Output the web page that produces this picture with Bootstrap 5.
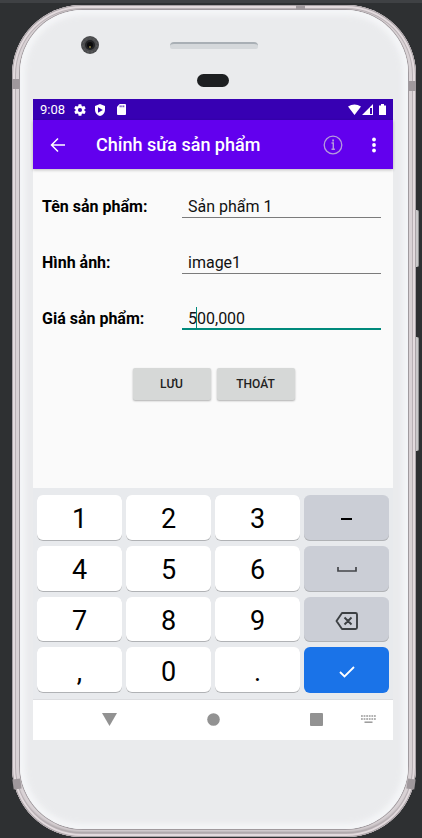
<!DOCTYPE html>
<html lang="vi">
<head>
<meta charset="utf-8">
<meta name="viewport" content="width=device-width, initial-scale=1">
<title>Chỉnh sửa sản phẩm</title>
<link href="https://cdn.jsdelivr.net/npm/bootstrap@5.3.0/dist/css/bootstrap.min.css" rel="stylesheet">
<style>
body { background: #2e3032; font-family: Roboto, "Noto Sans", sans-serif; color: #000; }
svg { display: block; flex: none; }
.stage { padding: 2px 6px 0 12px; border-top: 3px solid #3f4144; }
.phone { padding: 5px 8px 8px; border-radius: 70px; background: #d9d2d5;
  box-shadow: inset 0 0 0 1px #aaa3a7, inset 0 0 0 3px #e2dadd, inset 0 0 0 4px #b9b1b5, inset 0 -5px 3px #9b9598; }
.face { border-radius: 63px; padding: 0 15px 0 13px; background: #eaebed;
  box-shadow: 0 0 0 1px #a09a9e, inset 0 0 4px 4px #f4f5f7, inset 0 0 6px 6px #f0f1f3; }
.top-bezel { height: 89px; padding-top: 32px; }
.camera { top: 26px; left: 61px; width: 18px; height: 18px; }
.speaker { width: 88px; height: 7px; border-radius: 4px 4px 2px 2px; margin-left: 2px; background: #d5d8db; border-top: 2px solid #a9afb5; }
.sensor { width: 32px; height: 13px; margin-top: 25px; background: #1d1f21; }
.chin { height: 89px; }
.band { background: #9f989c; width: 8px; height: 10px; }
.band-l { left: 0; top: 74px; } .band-r { right: 0; top: 76px; }
.band-lb { left: 1px; bottom: 48px; transform: rotate(-8deg); } .band-rb { right: 1px; bottom: 48px; transform: rotate(8deg); }
.band-t { right: 111px; top: 0; width: 9px; height: 5px; }
.side-key { right: -3px; width: 3px; border-radius: 0 2px 2px 0; background: #c9c8c9; border-right: 1px solid #929394; }
.side-power { top: 205px; height: 57px; } .side-volume { top: 332px; height: 114px; }
.status-bar { height: 21px; background: #3700b3; font-size: 13px; line-height: 21px; padding: 0 7px; }
.app-bar { height: 49px; background: #6200ee; padding: 0 14px 0 16px; box-shadow: 0 1px 3px rgba(0,0,0,.25); }
.app-title { font-size: 18px; line-height: 24px; font-weight: 500; margin-left: 29px; padding-top: 1px; }
.info-btn { margin-right: 26px; }
.product-form { background: #fafafa; padding: 21px 12px 88px 9px; font-size: 16px; }
.field-row { margin-bottom: 28px; }
.field-label { width: 140px; line-height: 20px; padding-top: 7px; font-weight: 700; height: 28px; }
.field-input { height: 28px; border: 0; border-bottom: 1px solid #7b7b7b; border-radius: 0; background: transparent; padding: 6px 6px 0; line-height: 20px; color: #111; outline: 0; }
.field-active { border-bottom: 2px solid #00897b; }
.caret { left: 14px; top: 5px; width: 1px; height: 21px; background: #00897b; }
.form-actions { gap: 6px; padding-top: 10px; margin-right: -4px; }
.action-btn { width: 78px; height: 32px; border: 0; border-radius: 2px; background: #d6d8d7; color: #222; font-size: 12px; font-weight: 500; padding: 0; box-shadow: 0 1px 2px rgba(0,0,0,.3); }
.keypad { display: grid; grid-template-columns: repeat(4, 1fr); grid-template-rows: repeat(4, 1fr); gap: 5px 4px; height: 211px; padding: 7px 4px 6px; background: #e8eaed; }
.keycap { border: 0; border-radius: 6px; background: #fff; color: #000; font-size: 27px; line-height: 32px; padding: 3px 0 0; box-shadow: inset 0 -1px 0 #b0b2b5; }
.key-alt { background: #cbced6; }
.key-done { background: #1a73e8; box-shadow: none; }
.nav-strip { height: 41px; background: #fff; border-top: 1px solid #dcdde0; padding: 0 17px 2px 69px; }
.nav-main { gap: 90px; }
.bare { background: none; border: 0; padding: 0; color: inherit; }
</style>
</head>
<body>
<div class="stage">
<main class="phone position-relative">
  <span class="band band-l position-absolute"></span><span class="band band-r position-absolute"></span>
  <span class="band band-lb position-absolute"></span><span class="band band-rb position-absolute"></span>
  <span class="band band-t position-absolute"></span>
  <span class="side-key side-power position-absolute"></span><span class="side-key side-volume position-absolute"></span>
  <div class="face position-relative">
    <div class="top-bezel d-flex flex-column align-items-center">
      <svg class="camera position-absolute" viewBox="0 0 18 18" aria-hidden="true"><circle cx="9" cy="9" r="9" fill="#4a4b4d"/><circle cx="9" cy="9" r="7" fill="none" stroke="#5f5f60" stroke-dasharray="2 2"/><circle cx="9" cy="9" r="5" fill="#222325"/><circle cx="9" cy="9" r="3" fill="#0a0a0b"/><circle cx="9" cy="11" r="1" fill="#8b8141"/></svg>
      <div class="speaker"></div>
      <div class="sensor rounded-pill"></div>
    </div>

    <div class="status-bar d-flex align-items-center text-white">
      <span>9:08</span>
      <svg class="ms-2" width="14" height="14" viewBox="0 0 24 24" fill="#fff" aria-hidden="true"><path d="M19.4 13c0-.3.1-.6.1-1s0-.7-.1-1l2.1-1.600a.5.5 0 0 0 .1-.6l-2-3.500a.5.5 0 0 0-.6-.2l-2.500 1a7 7 0 0 0-1.700-1l-.4-2.600a.5.5 0 0 0-.5-.5h-4a.5.5 0 0 0-.5.4l-.4 2.700a7 7 0 0 0-1.700 1l-2.500-1a.5.5 0 0 0-.6.200l-2 3.500a.5.5 0 0 0 .1.600L4.500 11a8 8 0 0 0 0 2l-2.100 1.600a.5.5 0 0 0-.1.600l2 3.500c.1.200.4.300.6.200l2.500-1a7 7 0 0 0 1.700 1l.4 2.700c0 .2.200.4.5.4h4c.200 0 .5-.2.5-.4l.4-2.700a7 7 0 0 0 1.700-1l2.500 1c.200.1.5 0 .6-.2l2-3.500a.5.5 0 0 0-.1-.6zM12 15.500a3.500 3.500 0 1 1 0-7 3.500 3.500 0 0 1 0 7z"/></svg>
      <svg class="mx-2" width="10" height="12" viewBox="0 0 10 12" aria-hidden="true"><path fill="#fff" d="M5 0 0 2v4c0 3 2 5.300 5 6 3-.7 5-3 5-6V2z"/><path fill="#3700b3" d="M3 3.200v5.600L7.800 6z"/></svg>
      <svg class="ms-1" width="9" height="11" viewBox="0 0 10 12" aria-hidden="true"><path fill="#fff" d="M3 0h6q1 0 1 1v10q0 1-1 1H1q-1 0-1-1V3z"/><path stroke="#3700b3" d="M3.500 1.500v2M5.500 1.500v2M7.500 1.500v2"/></svg>
      <svg class="ms-auto" width="38" height="12" viewBox="0 0 38 12" aria-hidden="true"><path fill="#fff" d="M0 2.500Q6.500-1.500 13 2.500L6.500 11zM14 11 25 0v11z"/><path fill="#3700b3" d="M22 4h2v6h-2z"/><path fill="#fff" d="M31 1.500h2V0h3v1.500h2V11h-7z"/></svg>
    </div>

    <header class="app-bar d-flex align-items-center text-white position-relative">
      <button class="bare" type="button" aria-label="Quay lại"><svg width="18" height="18" viewBox="0 0 18 18" fill="none" stroke="#fff" stroke-width="1.500"><path d="M16 9H3M9 2.500 2.500 9 9 15.500"/></svg></button>
      <h1 class="app-title mb-0">Chỉnh sửa sản phẩm</h1>
      <button class="bare info-btn ms-auto" type="button" aria-label="Thông tin"><svg width="20" height="20" viewBox="0 0 20 20" fill="none" stroke="#b59bdc"><circle cx="10" cy="10" r="8.800" stroke-width="1.300"/><path d="M8.500 8h1.800v6M8.500 14.200h3.400" stroke-width="1.400"/><path d="M9.200 5.500h1.800" stroke-width="2"/></svg></button>
      <button class="bare" type="button" aria-label="Thêm"><svg width="10" height="16" viewBox="0 0 10 16" fill="#fff"><circle cx="5" cy="2.500" r="1.900"/><circle cx="5" cy="8" r="1.900"/><circle cx="5" cy="13.500" r="1.900"/></svg></button>
    </header>

    <form class="product-form">
      <div class="field-row d-flex">
        <label class="field-label flex-shrink-0" for="name">Tên sản phẩm:</label>
        <input class="field-input w-100" id="name" type="text" value="Sản phẩm 1">
      </div>
      <div class="field-row d-flex">
        <label class="field-label flex-shrink-0" for="image">Hình ảnh:</label>
        <input class="field-input w-100" id="image" type="text" value="image1">
      </div>
      <div class="field-row d-flex">
        <label class="field-label flex-shrink-0" for="price">Giá sản phẩm:</label>
        <div class="position-relative flex-grow-1">
          <input class="field-input field-active w-100 d-block" id="price" type="text" inputmode="decimal" value="500,000">
          <span class="caret position-absolute"></span>
        </div>
      </div>
      <div class="form-actions d-flex justify-content-center">
        <button class="action-btn" type="button">LƯU</button>
        <button class="action-btn" type="button">THOÁT</button>
      </div>
    </form>

    <section class="keypad" aria-label="Bàn phím số">
      <button class="keycap" type="button">1</button>
      <button class="keycap" type="button">2</button>
      <button class="keycap" type="button">3</button>
      <button class="keycap key-alt" type="button" aria-label="Trừ"><svg class="mx-auto" width="12" height="4" viewBox="0 0 12 4"><path d="M0 2h11" stroke="#000" stroke-width="2"/></svg></button>
      <button class="keycap" type="button">4</button>
      <button class="keycap" type="button">5</button>
      <button class="keycap" type="button">6</button>
      <button class="keycap key-alt" type="button" aria-label="Dấu cách"><svg class="mx-auto" width="20" height="6" viewBox="0 0 20 6"><path d="M1 0v4h18V0" fill="none" stroke="#44464a" stroke-width="1.700"/></svg></button>
      <button class="keycap" type="button">7</button>
      <button class="keycap" type="button">8</button>
      <button class="keycap" type="button">9</button>
      <button class="keycap key-alt" type="button" aria-label="Xóa"><svg class="mx-auto" width="24" height="18" viewBox="0 0 24 18" fill="none" stroke="#3c4043" stroke-width="1.900"><path d="M7 1h13.500Q22 1 22 2.500v13q0 1.500-1.500 1.500H7L1.500 9zM9.500 5.500l7 7M16.500 5.500l-7 7" stroke-linejoin="round"/></svg></button>
      <button class="keycap" type="button">,</button>
      <button class="keycap" type="button">0</button>
      <button class="keycap" type="button">.</button>
      <button class="keycap key-done" type="button" aria-label="Xong"><svg class="mx-auto" width="16" height="12" viewBox="0 0 16 12"><path d="m1 6 4.500 4.500L15 1" fill="none" stroke="#fff" stroke-width="1.800"/></svg></button>
    </section>

    <nav class="nav-strip d-flex align-items-center justify-content-between" aria-label="Điều hướng">
      <div class="nav-main d-flex align-items-center">
        <button class="bare" type="button" aria-label="Ẩn bàn phím"><svg width="15" height="13" viewBox="0 0 15 13"><path d="M0 0h15L7.500 13z" fill="#929292"/></svg></button>
        <button class="bare" type="button" aria-label="Trang chủ"><svg width="13" height="13" viewBox="0 0 13 13"><circle cx="6.500" cy="6.500" r="6.300" fill="#929292"/></svg></button>
        <button class="bare" type="button" aria-label="Gần đây"><svg width="13" height="13" viewBox="0 0 13 13"><rect width="13" height="13" rx="1" fill="#929292"/></svg></button>
      </div>
      <button class="bare" type="button" aria-label="Chọn bàn phím"><svg width="15" height="8" viewBox="0 0 15 8"><path d="M0 1h15M0 4h15" stroke="#999" stroke-width="1.600" stroke-dasharray="1.800 .8"/><path d="M3.500 7.200h8" stroke="#999" stroke-width="1.500"/></svg></button>
    </nav>
    <div class="chin"></div>
  </div>
</main>
</div>
<script src="https://cdn.jsdelivr.net/npm/bootstrap@5.3.0/dist/js/bootstrap.bundle.min.js"></script>
</body>
</html>
